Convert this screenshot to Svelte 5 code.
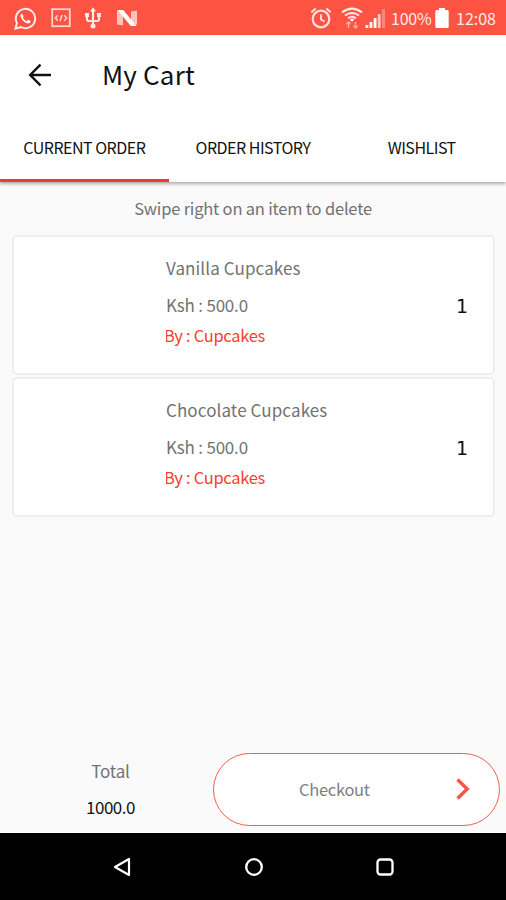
<script>
  let activeTab = $state('current');

  const tabs = [
    { id: 'current', label: 'CURRENT ORDER' },
    { id: 'history', label: 'ORDER HISTORY' },
    { id: 'wishlist', label: 'WISHLIST' },
  ];

  const items = [
    { name: 'Vanilla Cupcakes', price: 500, seller: 'Cupcakes', quantity: 1 },
    { name: 'Chocolate Cupcakes', price: 500, seller: 'Cupcakes', quantity: 1 },
  ];

  const total = items.reduce((sum, item) => sum + item.price * item.quantity, 0);
</script>

<div class="screen">
  <div class="status-bar">
    <div class="status-left">
      <svg width="23" height="23" viewBox="0 0 24 24" fill="none" stroke="#ffece9">
        <path d="M1.5 22.5l1.6-5.7a10.1 10.1 0 1 1 4.1 4.1z" stroke-width="2" />
        <path d="M8 6.8c-1.6 1-1.6 3 0 5.4 1.7 2.7 4.2 4.7 6.5 4.9 1.7.1 3-1 2.8-2.4l-2.7-1.4-1.4 1.5c-1.8-.7-3.3-2.2-4-3.8l1-1.4z" fill="#fff" stroke="none" />
      </svg>
      <svg width="20" height="20" viewBox="0 0 20 20" fill="none" stroke="#ffd6d0" stroke-width="1.8">
        <rect x="1.2" y="1.2" width="17.6" height="17" />
        <path d="M6.7 7.2L4.4 10l2.3 2.8M13.3 7.2l2.3 2.8-2.3 2.8M11 6.7l-2 6.6" stroke-width="1.5" />
      </svg>
      <svg width="18" height="22" viewBox="0 0 18 22" fill="none" stroke="#ffece9" stroke-width="2">
        <path d="M9 4v15M3 8v4.2Q3 14 5 14h8q2 0 2-1.8V8" />
        <path d="M9 .3l3 4.2H6zM1 6h4v4H1zM13 6h4v4h-4z" fill="#ffece9" stroke="none" />
        <circle cx="9" cy="19" r="2.5" fill="#ffece9" stroke="none" />
      </svg>
      <svg width="22" height="18" viewBox="0 0 22 18">
        <path d="M1 1.5l6 1.2v13.8L1 15.5zM15 2.5l6-1v14l-6 1z" fill="#ffc4bc" />
        <path d="M1.5 1h5.7L20.5 17h-5.7z" fill="#fff" />
      </svg>
    </div>
    <div class="status-right">
      <svg width="22" height="22" viewBox="0 0 22 22" fill="none" stroke="#ffe0dc">
        <circle cx="11" cy="12" r="8.3" stroke-width="2.2" />
        <path d="M11 7.2v5.2l3.6 2.4" stroke-width="1.9" />
        <path d="M1.3 5.2l4.4-3.6M20.7 5.2l-4.4-3.6" stroke-width="2" />
      </svg>
      <svg class="wifi" width="22" height="22" viewBox="0 0 22 22" fill="none" stroke="#ffece9">
        <path d="M1 5.4q10-7.6 20 0M4 8.5q7-5.2 14 0M7 11.2q4-3 8 0" stroke-width="2" />
        <path d="M8.7 12.2q2.3-1.5 4.6 0L11 14.8z" fill="#fff" stroke="none" />
        <path d="M7.5 21v-6M5.3 17.3l2.2-2.4 2.2 2.4M14.5 14.8v6M12.3 18.6l2.2 2.4 2.2-2.4" stroke="#ffaca2" stroke-width="1.4" />
      </svg>
      <svg class="signal" width="21" height="20" viewBox="0 0 21 20">
        <path d="M.5 17h2.8v3H.5zM4.6 14h2.8v6H4.600zM8.700 10h2.800v10H8.700z" fill="#fff" />
        <path d="M12.8 6h2.8v14h-2.8z" fill="#ffc8c1" />
        <path d="M17 1h3v19h-3z" fill="#ff8578" />
      </svg>
      <span class="percent">100%</span>
      <svg class="battery" width="14" height="20" viewBox="0 0 14 20">
        <path d="M4 0h6v2h2.2q1.5 0 1.5 1.5v15Q13.7 20 12.2 20H1.8Q.3 20 .3 18.5v-15Q.3 2 1.8 2H4z" fill="#fff" />
      </svg>
      <span class="clock">12:08</span>
    </div>
  </div>

  <header>
    <div class="app-bar">
      <button class="back" aria-label="Back">
        <svg width="24" height="24" viewBox="0 0 24 24" fill="none" stroke="#111" stroke-width="2.4">
          <path d="M23 12H2.5M12.5 1.7L2.2 12l10.3 10.3" />
        </svg>
      </button>
      <h1>My Cart</h1>
    </div>
    <nav>
      {#each tabs as tab}
        <button class="tab" class:active={activeTab === tab.id} onclick={() => (activeTab = tab.id)}>
          {tab.label}
        </button>
      {/each}
    </nav>
  </header>

  <main>
    <p class="hint">Swipe right on an item to delete</p>
    <div class="cart">
      {#each items as item}
        <article class="card">
          <div class="details">
            <div class="name">{item.name}</div>
            <div class="price">Ksh : {item.price.toFixed(1)}</div>
            <div class="seller">By : {item.seller}</div>
          </div>
          <div class="quantity">{item.quantity}</div>
        </article>
      {/each}
    </div>
  </main>

  <footer>
    <div class="total">
      <div class="total-label">Total</div>
      <div class="total-value">{total.toFixed(1)}</div>
    </div>
    <button class="checkout">
      <span>Checkout</span>
      <svg width="16" height="24" viewBox="0 0 16 24" fill="none" stroke="#f8564a" stroke-width="3.4">
        <path d="M2.5 2.5L12.2 12l-9.7 9.5" />
      </svg>
    </button>
  </footer>

  <div class="nav-bar">
    <svg width="20" height="22" viewBox="0 0 20 22" fill="none" stroke="#fff" stroke-width="2.2" stroke-linejoin="round">
      <path d="M17 3v16L3 11z" />
    </svg>
    <svg width="20" height="20" viewBox="0 0 20 20" fill="none" stroke="#fff" stroke-width="2.3">
      <circle cx="10" cy="10" r="7.8" />
    </svg>
    <svg width="20" height="20" viewBox="0 0 20 20" fill="none" stroke="#fff" stroke-width="2.3">
      <rect x="2.5" y="2.5" width="15" height="15" rx="3" />
    </svg>
  </div>
</div>

<style>
  :global(body) {
    margin: 0;
    background: #fafafa;
  }
  .screen {
    width: 506px;
    height: 900px;
    display: flex;
    flex-direction: column;
    overflow: hidden;
    background: #fafafa;
    color: #727272;
    font-family: 'Noto Sans CJK SC', 'Noto Sans', sans-serif;
    font-size: 17px;
  }
  svg {
    display: block;
    flex: none;
  }
  button {
    border: none;
    background: none;
    padding: 0;
    font-family: inherit;
    cursor: pointer;
  }
  .status-bar {
    height: 35px;
    flex: none;
    display: flex;
    align-items: center;
    justify-content: space-between;
    background: #fc5343;
    color: #ffece9;
    padding: 1px 10px 0 14px;
    box-sizing: border-box;
    font-size: 16px;
    line-height: 32px;
  }
  .status-left,
  .status-right {
    display: flex;
    align-items: center;
  }
  .status-left {
    gap: 13.5px;
  }
  .wifi {
    margin-left: 9px;
  }
  .signal {
    margin-left: 2px;
  }
  .percent {
    margin-left: 5px;
    width: 41px;
    white-space: nowrap;
    letter-spacing: -0.2px;
  }
  .battery {
    margin-left: 3px;
  }
  .clock {
    margin-left: 7px;
    width: 40px;
    white-space: nowrap;
  }
  header {
    flex: none;
    background: #fff;
    box-shadow: 0 2px 3px rgba(0, 0, 0, 0.3);
    z-index: 1;
  }
  .app-bar {
    height: 80px;
    display: flex;
    align-items: center;
    padding-left: 28px;
  }
  h1 {
    margin: 0 0 2px 50px;
    color: #111;
    font-size: 26px;
    font-weight: 400;
    line-height: 36px;
    letter-spacing: 0.2px;
    white-space: nowrap;
  }
  nav {
    display: grid;
    grid-template-columns: repeat(3, 1fr);
    height: 67px;
  }
  .tab {
    color: #111;
    font-size: 16px;
    line-height: 24px;
    letter-spacing: -0.5px;
    border-bottom: 3px solid transparent;
    white-space: nowrap;
  }
  .tab.active {
    border-bottom-color: #ee3d24;
  }
  main {
    flex: 1;
    padding: 0 11px;
  }
  .hint {
    margin: 0;
    height: 53px;
    line-height: 53px;
    text-align: center;
    font-size: 16.5px;
    letter-spacing: -0.2px;
  }
  .cart {
    display: flex;
    flex-direction: column;
    gap: 2px;
  }
  .card {
    height: 140px;
    box-sizing: border-box;
    display: flex;
    align-items: center;
    justify-content: space-between;
    margin-left: 1px;
    padding: 0 25px 0 152px;
    background: #fff;
    border: 2px solid #eeeeef;
    border-radius: 5px;
  }
  .details {
    padding-bottom: 7px;
    white-space: nowrap;
    line-height: 30px;
  }
  .name {
    margin-bottom: 7px;
    letter-spacing: 0.1px;
  }
  .price {
    letter-spacing: -0.2px;
  }
  .seller {
    color: #f6402f;
    font-size: 16.5px;
    letter-spacing: -0.3px;
    text-indent: -2px;
    clip-path: inset(0);
  }
  .quantity {
    padding-top: 2px;
    color: #111;
    font-family: 'DejaVu Sans', sans-serif;
    font-size: 19px;
    line-height: 30px;
  }
  footer {
    flex: none;
    height: 80px;
    display: flex;
    align-items: flex-start;
    padding-right: 6px;
  }
  .total {
    width: 213px;
    padding-left: 8px;
    box-sizing: border-box;
    text-align: center;
    line-height: 36px;
  }
  .total-label {
    letter-spacing: -0.2px;
  }
  .total-value {
    color: #111;
    letter-spacing: -0.5px;
  }
  .checkout {
    flex: 1;
    height: 73px;
    display: flex;
    align-items: center;
    justify-content: space-between;
    padding: 0 28px 2px 85px;
    background: #fff;
    border: 1.5px solid #fb5a4e;
    border-radius: 37px;
    color: #808080;
    font-size: 16.5px;
    letter-spacing: -0.3px;
  }
  .nav-bar {
    height: 67px;
    flex: none;
    display: flex;
    align-items: center;
    justify-content: space-between;
    padding: 0 111px 0 112px;
    box-sizing: border-box;
    background: #000;
  }
</style>
